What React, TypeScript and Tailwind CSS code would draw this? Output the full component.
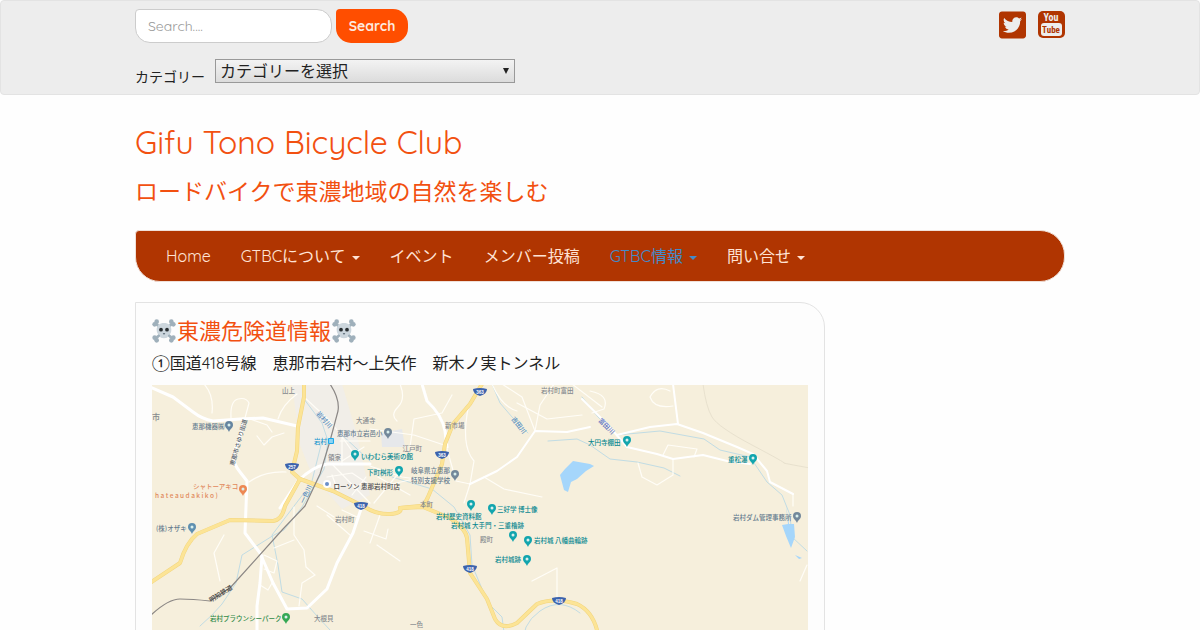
import { FaTwitterSquare } from "react-icons/fa";

type NavItem = { label: string; dropdown?: boolean; active?: boolean };

const navItems: Array<NavItem> = [
  { label: "Home" },
  { label: "GTBCについて", dropdown: true },
  { label: "イベント" },
  { label: "メンバー投稿" },
  { label: "GTBC情報", dropdown: true, active: true },
  { label: "問い合せ", dropdown: true },
];

const fontStack =
  "font-['Quicksand','Lato','Noto_Sans_CJK_JP',sans-serif]";

function YoutubeSquare() {
  return (
    <svg viewBox="0 0 27 27" className="size-[27px]" aria-hidden="true">
      <rect width="27" height="27" rx="5" fill="#b03501" />
      <rect x="3" y="12" width="21" height="13" rx="3" fill="#ededed" />
      <g
        fontFamily="'Liberation Sans Narrow','Roboto Condensed','Roboto',sans-serif"
        fontWeight="bold"
        textAnchor="middle"
      >
        <text x="13" y="10" fontSize="10" fill="#ededed">
          You
        </text>
        <text x="13" y="22" fontSize="9" fill="#b03501">
          Tube
        </text>
      </g>
    </svg>
  );
}

function Skull() {
  return (
    <svg
      viewBox="0 0 36 36"
      className="inline-block size-6 align-[-4px]"
      role="img"
      aria-label="ドクロ"
    >
      <g stroke="#9fb0bb" strokeWidth="4" strokeLinecap="round">
        <path d="M6 7 30 29M30 7 6 29" />
      </g>
      <g fill="#9fb0bb">
        <circle cx="7" cy="4" r="3.5" />
        <circle cx="4" cy="8" r="3.5" />
        <circle cx="29" cy="4" r="3.5" />
        <circle cx="32" cy="8" r="3.5" />
        <circle cx="4" cy="28" r="3.5" />
        <circle cx="7" cy="32" r="3.5" />
        <circle cx="32" cy="28" r="3.5" />
        <circle cx="29" cy="32" r="3.5" />
      </g>
      <path
        d="M18 6c-7 0-11 4-11 10 0 5 2 7 5 8v2c0 2 2 3 6 3s6-1 6-3v-2c3-1 5-3 5-8 0-6-4-10-11-10z"
        fill="#ccd6dd"
      />
      <circle cx="13.5" cy="16" r="2.8" fill="#292f33" />
      <circle cx="22.5" cy="16" r="2.8" fill="#292f33" />
      <path d="M16 21h4l-2 3z" fill="#66757f" />
    </svg>
  );
}

const minorRoads = [
  "M52-1Q62 10 60 28",
  "M79 33Q78 16 86 14T97 18L93 33",
  "M98 34L115 40 120 47M105 51L112 60 120 52 132 48",
  "M145 9Q130 20 126 34",
  "M97 97Q112 86 134 87",
  "M152 12L178 36 188 49 200 66M190 50V80M188 56H218",
  "M180 79L218 118M190 76L212 62M175 92L200 88 218 100M186 106L180 90M200 110L214 92",
  "M218 81L250 92 280 96M218 104L262 94M226 92L258 110M222 118L250 84",
  "M248-1Q254 14 246 22T245 36",
  "M258 62L262 34 290 28 300 10M218 44L262 50 292 60",
  "M350-1L370 12 383 46M340-1Q350 22 365 26",
  "M420-1L450 22M383 46L388 20 402 -1M365 18L395 34 430 30",
  "M317 19Q308 60 322 76L318 99 312 118M295 64L304 96 318 99",
  "M498 12Q505-1 518 6M498 12Q502 24 521 21M438 6Q458 10 452 24L440 28",
  "M511 70L516 60 545 64 542 72M521 74V90L505 100 490 92 486 78",
  "M142 122V150L152 165 154 182 163 190 150 198 147 221M122 163L142 155",
  "M72 150L62 168 68 196M108 200L116 205 120 198M112 170L125 176 122 188 112 184",
  "M212 146L234 154 236 144M225 160L248 176M228 130L218 158",
  "M190 125L205 132M175 130L198 150M165 121L182 132",
  "M380 196L405 183V215M332 92L352 104 390 112",
  "M641 109V121M655 180L648 196",
];

const roads = [
  "M-2 2L21 12 41 27Q50 34 61 36L88 34 111 33 145 41",
  "M91 34Q90 49 84 62T88 87L95 96 93 148 108 168 121 198 135 224 155 223 175 204 185 178 201 148 210 121",
  "M110 171L108 198 105 221V262",
  "M146 96Q160 82 175 79H218M146 96L128 123",
  "M270-1L275 16Q290 30 293 46L295 62",
];

const thinRoads = [
  "M318 99L345 86 365 72 383 46 415 47 438 42",
  "M465 50L498 42 525 39 551 48 585 62 601 69 615 86 618 97 641 109",
  "M430 14L455 39 475 62 505 69 521 74 551 70 575 76 598 79",
  "M521-1L526 39",
];

const highways = [
  "M152-1V12L146 42 145 66 140 87 148 94 181 106 211 121 Q225 130 238 129T248 123L271 122 298 133Q314 144 315 153L318 188 335 214 343 234Q350 246 365 238L385 219Q402 212 425 219 440 226 445 245L446 262",
  "M148 94L133 121Q130 135 121 136L78 135 45 149Q34 158 28 178L-2 198",
  "M330-1L318 19 301 39 293 59 290 79 276 112 271 122M248 123L278 120",
];

const streams = [
  "M152 14L170 38 176 56 172 84 150 122 132 145 122 150 90 170 84 198 70 219 60 230 48 241",
  "M170 56L160 96M152 108L120 150 126 180 130 207 150 214 165 231 178 245",
  "M340-1L348 18 360 32 376 48M396 56L425 54 438 60 458 74 485 77 512 83 528 91",
  "M430 12L446 32 465 50 508 46 552 54 568 65 598 72 615 97 630 110 638 130 640 152 655 166",
  "M190 50L218 76M240 92L280 104 302 122 318 150 320 180 336 218 350 232 354 262",
  "M372 262Q368 240 388 226T428 228",
];

const rail =
  "M178-1Q188 14 186 26L178 56 168 89 153 121 131 144 78 203 58 216 Q40 214 28 214T-2 231";

type Label = { text: string; x: number; y: number; color: string; rotate?: number; size?: number };

const gray = "#85898e";
const teal = "#078791";
const slate = "#657b8e";

// label positions are in the map's own units, two per drawn pixel
const labels: Array<Label> = [
  { text: "市", x: 0, y: 70, color: gray, size: 16 },
  { text: "山上", x: 260, y: 16, color: gray },
  { text: "恵那機器㈱", x: 80, y: 87, color: slate },
  { text: "大通寺", x: 408, y: 76, color: gray },
  { text: "恵那市立岩邑小", x: 370, y: 102, color: slate },
  { text: "岩村", x: 324, y: 117, color: "#2297cf" },
  { text: "領家", x: 352, y: 149, color: gray },
  { text: "江戸町", x: 501, y: 131, color: gray },
  { text: "いわむら美術の館", x: 418, y: 147, color: teal },
  { text: "下町桝形", x: 430, y: 180, color: teal },
  { text: "岐阜県立恵那", x: 518, y: 176, color: slate },
  { text: "特別支援学校", x: 518, y: 195, color: slate },
  { text: "ローソン 恵那岩村町店", x: 363, y: 207, color: "#484848" },
  { text: "シャトーアキコ", x: 82, y: 207, color: "#e18a5c" },
  { text: "h a t e a u d a k i k o )", x: 6, y: 226, color: "#e18a5c" },
  { text: "本町", x: 536, y: 243, color: gray },
  { text: "新市場", x: 586, y: 86, color: gray },
  { text: "岩村町富田", x: 778, y: 16, color: gray },
  { text: "大円寺棚田", x: 872, y: 119, color: teal },
  { text: "重松瀑", x: 1152, y: 153, color: teal },
  { text: "岩村歴史資料館", x: 568, y: 267, color: teal },
  { text: "三好学 博士像", x: 690, y: 254, color: teal },
  { text: "岩村城 大手門・三重櫓跡", x: 598, y: 286, color: teal },
  { text: "岩村城 八幡曲輪跡", x: 764, y: 316, color: teal },
  { text: "殿町", x: 656, y: 314, color: gray },
  { text: "岩村城跡", x: 686, y: 354, color: teal },
  { text: "岩村町", x: 366, y: 273, color: gray },
  { text: "(株)オザキ", x: 8, y: 292, color: slate },
  { text: "岩村プラウンシーパーク", x: 116, y: 472, color: "#2f8a48" },
  { text: "大根貝", x: 324, y: 471, color: gray },
  { text: "一色", x: 516, y: 484, color: gray },
  { text: "岩村ダム管理事務所", x: 1162, y: 269, color: slate },
  { text: "恵那市さゆり街道", x: 164, y: 162, color: "#555f6b", rotate: -74, size: 12 },
  { text: "岩村川", x: 328, y: 58, color: "#5a8fc0", rotate: 48 },
  { text: "一色川", x: 304, y: 238, color: "#5a8fc0", rotate: -65 },
  { text: "吉田川", x: 718, y: 68, color: "#5a8fc0", rotate: 52 },
  { text: "富田川", x: 892, y: 72, color: "#5a6fc0", rotate: 45 },
  { text: "明知鉄道", x: 118, y: 435, color: "#444444", rotate: -32 },
];

const pins = [
  { x: 77, y: 41, color: "#6585a0" },
  { x: 236, y: 48, color: "#73889a" },
  { x: 203, y: 70, color: "#12a5ae" },
  { x: 247, y: 86, color: "#12a5ae" },
  { x: 303, y: 90, color: "#73889a" },
  { x: 91, y: 105, color: "#ed8853" },
  { x: 475, y: 56, color: "#12a5ae" },
  { x: 601, y: 74, color: "#12a5ae" },
  { x: 319, y: 120, color: "#12a5ae" },
  { x: 340, y: 124, color: "#12a5ae" },
  { x: 361, y: 151, color: "#12a5ae" },
  { x: 376, y: 156, color: "#12a5ae" },
  { x: 375, y: 175, color: "#12a5ae" },
  { x: 40, y: 143, color: "#6090b0" },
  { x: 645, y: 132, color: "#73889a" },
  { x: 134, y: 233, color: "#35a854" },
];

const shields = [
  { x: 140, y: 82, no: "257" },
  { x: 209, y: 121, no: "418" },
  { x: 328, y: 7, no: "363" },
  { x: 290, y: 70, no: "363" },
  { x: 318, y: 184, no: "418" },
  { x: 407, y: 216, no: "418" },
];

function RoadMap() {
  return (
    <svg
      viewBox="0 0 1312 520"
      className="block w-full"
      role="img"
      aria-label="恵那市岩村周辺の地図"
    >
      <rect width="1312" height="520" fill="#f6efdc" />
      <g transform="scale(2)" fill="none" strokeLinejoin="round" strokeLinecap="round">
        <path d="M140-1H190L205 50 218 110 190 124 160 90 148 60z" fill="#f1eee8" />
        <path d="M229 48L250 44 253 62 230 62z" fill="#e6e8eb" />
        <path d="M551-1Q554 22 560 32T600 60 632 78 658 83" stroke="#e8e1ce" />
        {streams.map((d) => (
          <path key={d} d={d} stroke="#c1dce4" />
        ))}
        {minorRoads.map((d) => (
          <path key={d} d={d} stroke="#fffdf7" strokeWidth="1.2" />
        ))}
        {thinRoads.map((d) => (
          <path key={d} d={d} stroke="#ffffff" strokeWidth="2" />
        ))}
        {roads.map((d) => (
          <path key={d} d={d} stroke="#ffffff" strokeWidth="3" />
        ))}
        {highways.map((d) => (
          <path key={d} d={d} stroke="#f2d57e" strokeWidth="4" />
        ))}
        {highways.map((d) => (
          <path key={d + "top"} d={d} stroke="#fce496" strokeWidth="3" />
        ))}
        <path d={rail} stroke="#8b8785" strokeWidth="1.2" />
        <g fill="#a5d6fb">
          <path d="M408 90L413 84 421 76 438 79 442 81 434 86 425 94 419 97 416 107 412 105z" />
          <path d="M634 121L637 139H642L643 152 639 163 634 151 630 140 636 139z" />
          <path d="M643 170L650 173 647 174z" />
        </g>
        <circle cx="175" cy="99" r="4" fill="#ffffff" />
        <circle cx="175" cy="99" r="2" fill="#6b8fc9" />
        <rect x="176" y="53" width="6" height="6" rx="1" fill="#1fa9e8" />
        <path d="M177.5 55h3M177.5 57h3" stroke="#ffffff" />
        {pins.map(({ x, y, color }) => (
          <g key={`${x}-${y}`}>
            <path
              d={`M${x} ${y + 6}C${x - 1} ${y + 3} ${x - 4} ${y + 2} ${x - 4} ${y - 1}a4 4 0 0 1 8 0C${x + 4} ${y + 2} ${x + 1} ${y + 3} ${x} ${y + 6}z`}
              fill={color}
            />
            <circle cx={x} cy={y - 1} r="1.5" fill="#d9f0ee" />
          </g>
        ))}
        {shields.map(({ x, y }) => (
          <path
            key={`${x}-${y}`}
            d={`M${x - 7} ${y - 3}Q${x} ${y - 5} ${x + 7} ${y - 3}Q${x + 7} ${y + 2} ${x} ${y + 4}Q${x - 7} ${y + 2} ${x - 7} ${y - 3}z`}
            fill="#3c63ad"
          />
        ))}
      </g>
      <g fontFamily="'Noto Sans CJK JP',sans-serif" fontSize="13" fontWeight="500">
        {labels.map(({ text, x, y, color, rotate, size }) => (
          <text
            key={text}
            x={x}
            y={y}
            fill={color}
            fontSize={size}
            transform={rotate ? `rotate(${rotate} ${x} ${y})` : undefined}
          >
            {text}
          </text>
        ))}
      </g>
      <g
        fontFamily="'Liberation Sans',sans-serif"
        fontSize="9"
        fontWeight="bold"
        fill="#ffffff"
        textAnchor="middle"
      >
        {shields.map(({ x, y, no }) => (
          <text key={`${x}-${y}`} x={x * 2} y={y * 2 + 3}>
            {no}
          </text>
        ))}
      </g>
    </svg>
  );
}

function TopBar() {
  return (
    <div className="rounded-sm border border-[#e3e3e3] bg-[#ededed] pt-2 pb-[7px]">
      <div className="mx-auto flex max-w-[930px] items-start justify-between">
        <div>
          <form className="flex gap-1" onSubmit={(e) => e.preventDefault()}>
            <input
              type="search"
              aria-label="Search"
              placeholder="Search...."
              className="h-[34px] w-[197px] rounded-[15px] rounded-tl-sm border border-[#cccccc] bg-white px-3 text-sm placeholder:text-[#999999]"
            />
            <button
              type="submit"
              className="h-[34px] w-[72px] rounded-[15px] rounded-tl-sm bg-[#ff4e00] text-sm font-bold text-[#fde9df]"
            >
              Search
            </button>
          </form>
          <div className="mt-4 flex items-start gap-[10px]">
            <label htmlFor="category" className="pt-2 text-sm leading-5">
              カテゴリー
            </label>
            <div className="relative">
              <select
                id="category"
                className="block h-6 w-[300px] appearance-none border border-[#999999] bg-linear-to-b from-[#f3f3f3] to-[#dcdcdc] pl-1 text-base leading-5"
              >
                <option>カテゴリーを選択</option>
              </select>
              <svg
                viewBox="0 0 6 6"
                className="pointer-events-none absolute top-[9px] right-[6px] size-[6px]"
                aria-hidden="true"
              >
                <path d="M0 0h6L3 6z" fill="#222222" />
              </svg>
            </div>
          </div>
        </div>
        <div className="flex gap-3 pt-[2px] text-[#b03501]">
          <a href="#" aria-label="Twitter" className="flex size-[27px] items-center">
            <FaTwitterSquare className="h-8 w-[27px] shrink-0" />
          </a>
          <a href="#" aria-label="YouTube">
            <YoutubeSquare />
          </a>
        </div>
      </div>
    </div>
  );
}

function NavBar() {
  return (
    <nav className="mt-5 rounded-[25px] rounded-tl-sm border border-[#f0e0d8] bg-[#b03501] px-[15px]">
      <ul className="flex flex-wrap">
        {navItems.map(({ label, dropdown, active }) => (
          <li key={label}>
            <a
              href="#"
              className={`flex items-center gap-[6px] px-[15px] py-[15px] leading-5 ${
                active ? "text-[#428bca]" : "text-[#ffe3d5]"
              }`}
            >
              {label}
              {dropdown && (
                <span className="mt-1 border-x-4 border-t-4 border-x-transparent border-t-current" />
              )}
            </a>
          </li>
        ))}
      </ul>
    </nav>
  );
}

export default function App() {
  return (
    <div className={`${fontStack} min-h-screen bg-[#fefefe] text-[#222222]`}>
      <TopBar />
      <div className="mx-auto max-w-[930px]">
        <header className="pt-[23px] text-[#f25010]">
          <h1 className="text-[32px] leading-12">
            <a href="#">Gifu Tono Bicycle Club</a>
          </h1>
          <p className="mt-2 text-[23px] leading-9">
            ロードバイクで東濃地域の自然を楽しむ
          </p>
        </header>
        <NavBar />
        <main className="mt-5 max-w-[690px] rounded-tr-[25px] border border-[#e3e3e3] bg-[#fdfdfd] px-4 pt-3 pb-4">
          <h2 className="text-[22px] leading-8 text-[#f25010]">
            <Skull />
            <span className="px-px">東濃危険道情報</span>
            <Skull />
          </h2>
          <p className="mt-1 mb-[10px] leading-6">
            ①国道418号線　恵那市岩村～上矢作　新木ノ実トンネル
          </p>
          <RoadMap />
        </main>
      </div>
    </div>
  );
}
